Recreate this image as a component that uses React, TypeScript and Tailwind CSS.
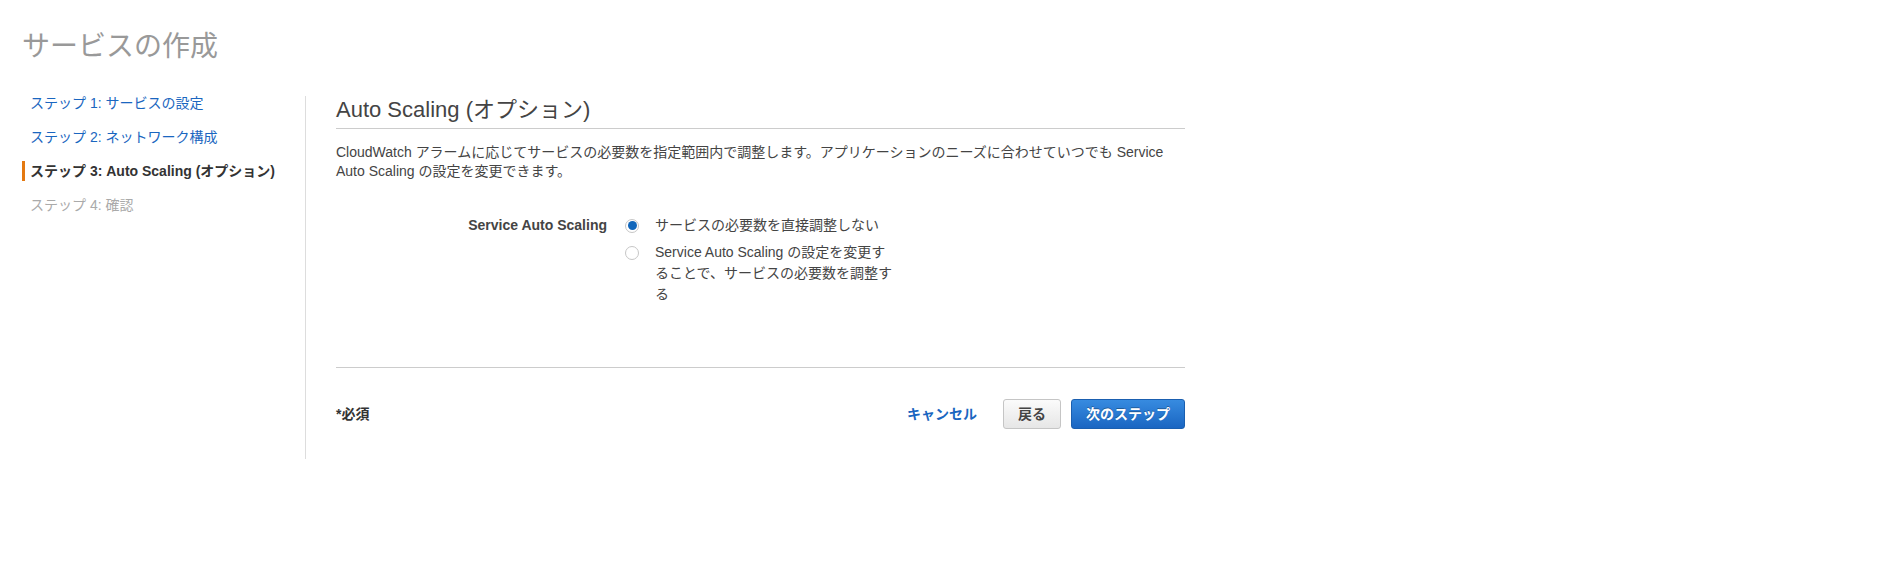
import React from "react";

const font = { fontFamily: '"Liberation Sans", Arial, "Noto Sans CJK JP", sans-serif' };

function Radio({ checked }: { checked?: boolean }) {
  return (
    <span className="flex h-[14px] w-[14px] shrink-0 items-center justify-center rounded-full border border-[#c6c6c6] bg-white">
      {checked && <span className="h-[9px] w-[9px] rounded-full bg-[#1166bb]" />}
    </span>
  );
}

export default function App() {
  return (
    <div className="min-h-[580px] bg-white pl-[22px] pt-[31px]" style={font}>
      <h1 className="text-[28px] leading-[32px] font-normal text-[#999999]">サービスの作成</h1>
      <div className="mt-[33px] flex">
        <nav className="flex w-[283px] shrink-0 flex-col gap-[20px] text-[14px] leading-[14px]">
          <a className="pl-[8px] text-[#1a66c0]">ステップ 1: サービスの設定</a>
          <a className="pl-[8px] text-[#1a66c0]">ステップ 2: ネットワーク構成</a>
          <div className="-my-[3px] flex items-center">
            <span className="h-[20px] w-[3px] bg-[#e47911]" />
            <span className="ml-[5px] font-bold text-[#333333]">ステップ 3: Auto Scaling (オプション)</span>
          </div>
          <span className="pl-[8px] text-[#aaaaaa]">ステップ 4: 確認</span>
        </nav>
        <main className="h-[363px] border-l border-[#dddddd] pl-[30px]">
          <div className="w-[849px]">
            <h2 className="border-b border-[#cccccc] pt-[2px] pb-[6px] text-[22px] leading-[24px] font-normal text-[#444444]">
              Auto Scaling (オプション)
            </h2>
            <p className="mt-[14px] text-[14px] leading-[19px] text-[#444444]">
              CloudWatch アラームに応じてサービスの必要数を指定範囲内で調整します。アプリケーションのニーズに合わせていつでも Service Auto Scaling の設定を変更できます。
            </p>
            <div className="mt-[34px] flex text-[14px] leading-[21px] text-[#444444]">
              <div className="w-[271px] text-right font-bold text-[#444444]">Service Auto Scaling</div>
              <div className="ml-[18px] flex flex-col gap-[6px]">
                <label className="flex items-start">
                  <span className="mt-[3.5px]"><Radio checked /></span>
                  <span className="ml-[16px] w-[240px]">サービスの必要数を直接調整しない</span>
                </label>
                <label className="flex items-start">
                  <span className="mt-[3.5px]"><Radio /></span>
                  <span className="ml-[16px] w-[240px]">Service Auto Scaling の設定を変更することで、サービスの必要数を調整する</span>
                </label>
              </div>
            </div>
            <div className="mt-[62px] border-t border-[#cccccc] pt-[31px]">
              <div className="flex items-center justify-between">
                <span className="text-[14px] font-bold text-[#333333]">*必須</span>
                <div className="flex items-center">
                  <a className="text-[14px] font-bold text-[#1a66c0]">キャンセル</a>
                  <button className="ml-[26px] h-[30px] w-[58px] rounded-[3px] border border-[#c5c5c5] bg-gradient-to-b from-[#fbfbfb] to-[#e6e6e6] text-[14px] font-bold text-[#444444]">
                    戻る
                  </button>
                  <button className="ml-[10px] h-[30px] w-[114px] rounded-[3px] border border-[#1a5fb0] bg-gradient-to-b from-[#378be0] to-[#1a66c2] text-[14px] font-bold text-white [text-shadow:0_-1px_0_rgba(0,0,0,0.3)]">
                    次のステップ
                  </button>
                </div>
              </div>
            </div>
          </div>
        </main>
      </div>
    </div>
  );
}
